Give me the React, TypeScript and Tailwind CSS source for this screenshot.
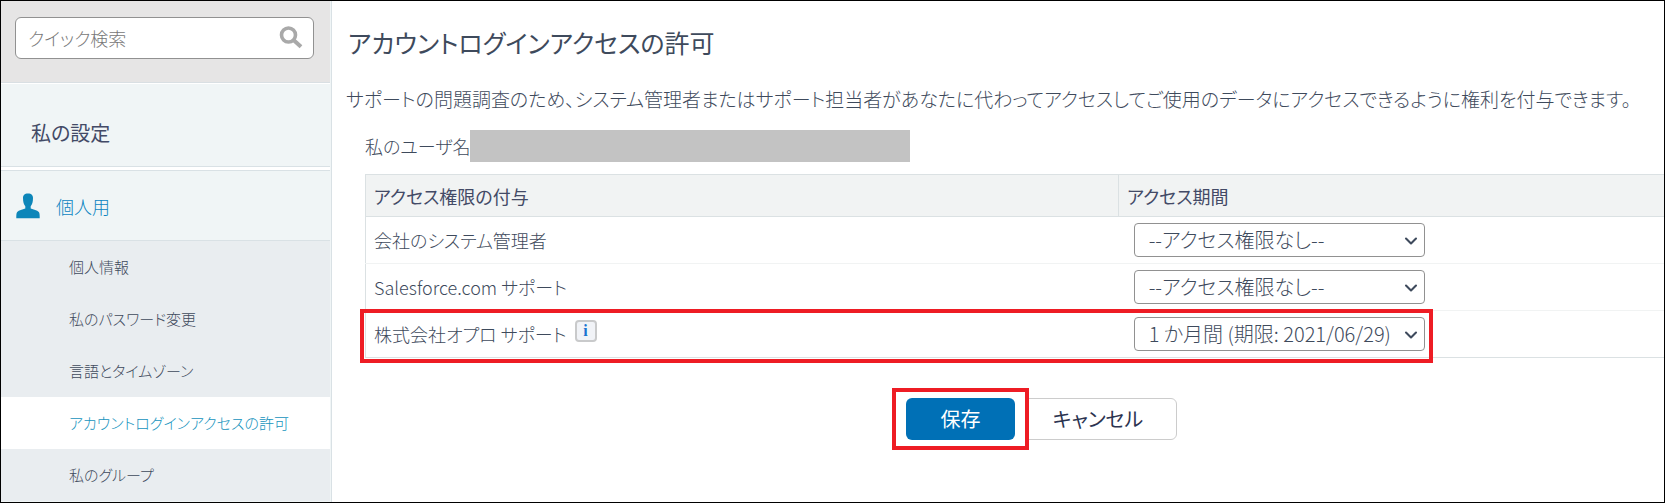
import { FC } from "react";
import { ChevronDown } from "lucide-react";
import clsx from "clsx";

const menuItems = [
  { label: "個人情報" },
  { label: "私のパスワード変更" },
  { label: "言語とタイムゾーン" },
  { label: "アカウントログインアクセスの許可", active: true },
  { label: "私のグループ" },
];

interface AccessRow {
  id: string;
  name: string;
  value: string;
  info?: boolean;
  highlight?: boolean;
}

const rows: AccessRow[] = [
  { id: "admin", name: "会社のシステム管理者", value: "--アクセス権限なし--" },
  {
    id: "salesforce",
    name: "Salesforce.com サポート",
    value: "--アクセス権限なし--",
  },
  {
    id: "opro",
    name: "株式会社オプロ サポート",
    value: "1 か月間 (期限: 2021/06/29)",
    info: true,
    highlight: true,
  },
];

const SearchIcon = () => (
  <svg
    viewBox="0 0 24 24"
    className="h-6 w-6"
    fill="none"
    stroke="#a9a9a9"
    aria-hidden="true"
  >
    <circle cx="9.5" cy="9" r="7" strokeWidth="3.6" />
    <path d="M14.5 14l7.5 6.8" strokeWidth="4" />
  </svg>
);

const UserIcon = () => (
  <svg viewBox="0 0 24 26" className="h-[26px] w-6" fill="#0d86b9" aria-hidden="true">
    <path d="M12 .5c3.600 0 5 1.800 5 4.500 0 3.800-.8 6.600-2.300 8.300v2.100c3 1 6.300 1.500 8.100 3.500.9 1.100.9 3.200.9 6.400H.3c0-3.200 0-5.300.9-6.400 1.800-2 5.100-2.500 8.100-3.500v-2.100C7.800 11.600 7 8.800 7 5 7 2.300 8.400.5 12 .5z" />
  </svg>
);

const Sidebar: FC = () => (
  <aside className="w-[331px] shrink-0 border-r border-[#d9e1e5] bg-[#f0f5f6] pr-px">
    <div className="border-b border-[#d9dfe3] bg-[#e6e5e5] pt-4 pr-4 pb-[23px] pl-3.5">
      <div className="flex h-[42px] items-center rounded-md border border-[#919191] bg-white pr-2.5 pl-3">
        <input
          type="text"
          aria-label="クイック検索"
          placeholder="クイック検索"
          className="min-w-0 flex-1 bg-transparent text-lg outline-none placeholder:text-[#777]"
        />
        <SearchIcon />
      </div>
    </div>
    <h2 className="flex h-[84px] items-center border-t border-b border-t-white border-b-[#d9e1e5] pt-4 pl-[30px] text-xl font-normal text-[#434a66]">
      私の設定
    </h2>
    <div className="h-[3px] bg-white" />
    <a
      href="#"
      className="flex h-[71px] items-center gap-4 border-t border-b border-[#d9e1e5] pl-[15px] text-lg text-[#0a84c1]"
    >
      <UserIcon />
      個人用
    </a>
    <nav className="bg-[#e9edf0]">
      {menuItems.map((item) => (
        <a
          key={item.label}
          href="#"
          className={clsx(
            "flex h-[52px] items-center pl-[68px] text-[15px]",
            item.active && "bg-white text-[#1593bd]"
          )}
        >
          {item.label}
        </a>
      ))}
    </nav>
  </aside>
);

const AccessTable: FC = () => (
  <table className="w-full table-fixed border-t border-b border-l border-[#dbe1e3] text-left">
    <thead>
      <tr className="h-[42px] border-b border-[#dbe1e3] bg-[#f1f3f3] text-lg text-[#434a66]">
        <th className="w-[58%] px-2 py-0 font-normal">アクセス権限の付与</th>
        <th className="border-l border-[#dbe1e3] px-2 py-0 font-normal">
          アクセス期間
        </th>
      </tr>
    </thead>
    <tbody>
      {rows.map((row) => (
        <tr
          key={row.id}
          className="relative border-b border-[#f1f3f3] last:border-b-0"
        >
          <td className="px-2 py-1.5">
            <div className="flex items-start gap-2">
              <label htmlFor={row.id} className="text-lg">
                {row.name}
              </label>
              {row.info && (
                <button
                  type="button"
                  aria-label="情報"
                  className="flex h-[22px] w-[22px] items-center justify-center rounded-sm border-2 border-[#c9cacb] bg-[#f1f3f7] font-['Liberation_Serif',serif] text-base leading-none font-bold text-[#1874d1]"
                >
                  i
                </button>
              )}
            </div>
            {row.highlight && (
              <div className="pointer-events-none absolute -top-0.5 -left-1.5 h-[54px] w-[calc(58%+320px)] border-4 border-[#ee1c24]" />
            )}
          </td>
          <td className="px-[15px] py-1.5">
            <div className="relative w-[291px]">
              <select
                id={row.id}
                defaultValue={row.value}
                className="block h-[34px] w-full appearance-none rounded-[4px] border border-[#919191] bg-white pr-8 pl-3.5 text-xl"
              >
                <option>{row.value}</option>
              </select>
              <ChevronDown
                strokeWidth={2.5}
                className="pointer-events-none absolute top-2 right-1 h-5 w-5"
              />
            </div>
          </td>
        </tr>
      ))}
    </tbody>
  </table>
);

const App: FC = () => {
  return (
    <div className="flex min-h-screen border border-black bg-white font-['Noto_Sans_CJK_JP',sans-serif] font-light text-[#3e4a5c] [font-feature-settings:'palt']">
      <Sidebar />
      <main className="min-w-0 flex-1 pl-3.5">
        <h1 className="mt-5 pl-0.5 text-[25px] leading-[42px] font-normal">
          アカウントログインアクセスの許可
        </h1>
        <p className="mt-5 text-[19px] leading-8">
          サポートの問題調査のため、システム管理者またはサポート担当者があなたに代わってアクセスしてご使用のデータにアクセスできるように権利を付与できます。
        </p>
        <div className="pl-[19px]">
          <div className="mt-[15px] flex items-center">
            <span className="w-[105px] text-lg whitespace-nowrap">
              私のユーザ名
            </span>
            <div className="h-8 w-[440px] bg-[#c3c3c3]" />
          </div>
          <div className="mt-3">
            <AccessTable />
          </div>
          <div className="mt-10 flex justify-center gap-1 pl-[54px] text-xl">
            <div className="relative z-10">
              <div className="pointer-events-none absolute -inset-x-3.5 -inset-y-2.5 border-4 border-[#ee1c24] bg-white" />
              <button
                type="button"
                className="relative h-[42px] w-[109px] rounded-md bg-[#0070b6] font-normal text-white"
              >
                保存
              </button>
            </div>
            <button
              type="button"
              className="h-[42px] w-[158px] rounded-md border border-[#ccc] bg-white font-normal text-[#2b3350]"
            >
              キャンセル
            </button>
          </div>
        </div>
      </main>
    </div>
  );
};

export default App;
